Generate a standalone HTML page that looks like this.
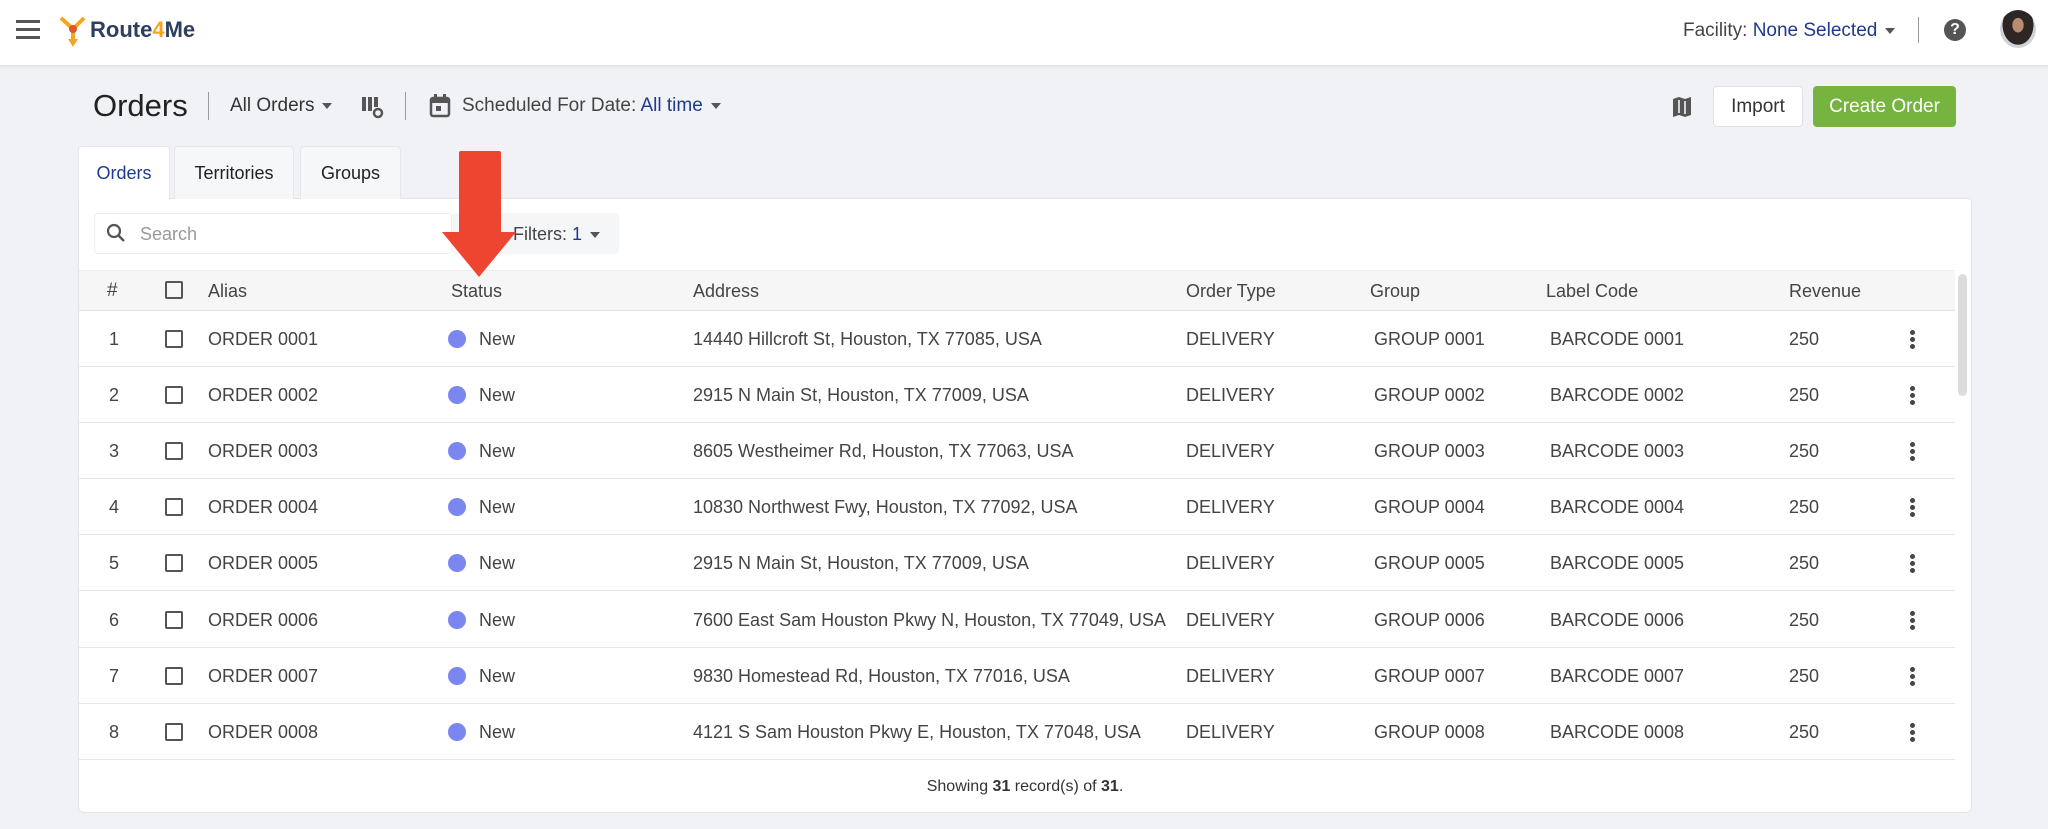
<!DOCTYPE html>
<html><head><meta charset="utf-8"><style>
*{box-sizing:border-box;margin:0;padding:0}
body{width:2048px;height:829px;background:#f1f2f6;font-family:"Liberation Sans",sans-serif;color:#333;position:relative;overflow:hidden;font-size:18px}
.a{position:absolute;white-space:nowrap}
.hdr{left:0;top:0;width:2048px;height:66px;background:#fff;border-bottom:1px solid #e2e3e8;box-shadow:0 1px 3px rgba(0,0,0,.06)}
.blue{color:#1e3a8a}
.card{left:78px;top:198px;width:1894px;height:615px;background:#fff;border:1px solid #e3e4e8;border-radius:0 4px 6px 6px}
.tab{top:146px;height:53px;background:#f6f7f9;border:1px solid #e6e7eb;border-bottom:none;border-radius:4px 4px 0 0;font-size:18px;text-align:center;line-height:52px;color:#222}
.th{top:270px;left:79px;width:1876px;height:41px;background:#f6f6f7;border-bottom:1px solid #e3e3e3;border-top:1px solid #eee}
.row{left:79px;width:1876px;height:56px;border-bottom:1px solid #e8e8e8}
.cell{position:absolute;top:0;line-height:56px;font-size:18px;color:#444}
.cb{position:absolute;width:18px;height:18px;border:2px solid #555;border-radius:2px}
.dot{position:absolute;width:18px;height:18px;border-radius:50%;background:#7b87f0}
.keb{position:absolute;width:5px;height:5px;border-radius:50%;background:#444}
.caret{display:inline-block;width:0;height:0;border-left:5px solid transparent;border-right:5px solid transparent;border-top:6px solid #555;vertical-align:middle;margin-left:8px}
</style></head><body>
<div class="a hdr"></div>
<div class="a" style="left:16px;top:20px;width:24px;height:3px;background:#555"></div>
<div class="a" style="left:16px;top:28px;width:24px;height:3px;background:#555"></div>
<div class="a" style="left:16px;top:36px;width:24px;height:3px;background:#555"></div>
<svg class="a" style="left:58px;top:15px" width="30" height="34" viewBox="0 0 30 34"><path d="M3 3L15 14L26 3M15 14L15 26" stroke="#f4a623" stroke-width="4" fill="none"/><circle cx="15" cy="14" r="4" fill="#e0562a"/><path d="M10 24L15 32L20 24Z" fill="#f4a623"/></svg>
<div class="a" style="left:90px;top:17px;font-size:22px;font-weight:bold;color:#2d3e60">Route<span style="color:#f4a623">4</span>Me</div>
<div class="a" style="left:1683px;top:20px;font-size:19px;color:#444">Facility: <span class="blue">None Selected</span><span class="caret"></span></div>
<div class="a" style="left:1918px;top:17px;width:1px;height:26px;background:#999"></div>
<div class="a" style="left:1944px;top:19px;width:22px;height:22px;border-radius:50%;background:#555;color:#fff;font-size:16px;font-weight:bold;text-align:center;line-height:22px">?</div>
<div class="a" style="left:2000px;top:10px;width:36px;height:38px;border-radius:50%;background:radial-gradient(ellipse at 50% 40%,#b88c70 0 22%,#2e2624 23% 60%,#cfd3d8 61%);"></div>

<div class="a" style="left:93px;top:88px;font-size:31px;color:#222">Orders</div>
<div class="a" style="left:208px;top:92px;width:1px;height:28px;background:#999"></div>
<div class="a" style="left:230px;top:95px;font-size:19px;color:#333">All Orders<span class="caret"></span></div>
<svg class="a" style="left:361px;top:96px" width="24" height="24" viewBox="0 0 24 24"><rect x="1" y="1" width="4" height="14" fill="#555"/><rect x="7" y="1" width="4" height="14" fill="#555"/><rect x="13" y="1" width="4" height="10" fill="#555"/><circle cx="17" cy="17" r="4" fill="none" stroke="#555" stroke-width="2.5"/></svg>
<div class="a" style="left:405px;top:92px;width:1px;height:28px;background:#999"></div>
<svg class="a" style="left:429px;top:94px" width="22" height="24" viewBox="0 0 22 24"><rect x="2" y="4" width="18" height="18" rx="2" fill="none" stroke="#555" stroke-width="2.5"/><rect x="2" y="4" width="18" height="5" fill="#555"/><rect x="5" y="0" width="3" height="5" fill="#555"/><rect x="14" y="0" width="3" height="5" fill="#555"/><rect x="7" y="12" width="5" height="5" fill="#555"/></svg>
<div class="a" style="left:462px;top:95px;font-size:19px;color:#444">Scheduled For Date: <span class="blue">All time</span><span class="caret"></span></div>
<svg class="a" style="left:1672px;top:96px" width="20" height="22" viewBox="0 0 20 22"><path d="M1 3L7 1L13 3L19 1V19L13 21L7 19L1 21Z" fill="#555"/><path d="M7 4V17M13 5V18" stroke="#fff" stroke-width="1.5"/></svg>
<div class="a" style="left:1713px;top:86px;width:90px;height:41px;background:#fff;border:1px solid #e0e1e5;border-radius:4px;text-align:center;line-height:39px;font-size:19px;color:#333">Import</div>
<div class="a" style="left:1813px;top:86px;width:143px;height:41px;background:#77b43f;border-radius:4px;text-align:center;line-height:41px;font-size:19px;color:#fff">Create Order</div>

<div class="a card"></div>
<div class="a tab" style="left:78px;width:92px;background:#fff;color:#1e3a8a;height:54px;z-index:2">Orders</div>
<div class="a tab" style="left:174px;width:120px">Territories</div>
<div class="a tab" style="left:300px;width:101px">Groups</div>

<div class="a" style="left:94px;top:213px;width:358px;height:41px;border:1px solid #eceef1;border-radius:4px;background:#fff"></div>
<svg class="a" style="left:106px;top:223px" width="20" height="20" viewBox="0 0 20 20"><circle cx="8" cy="8" r="6" fill="none" stroke="#555" stroke-width="2.2"/><path d="M12.5 12.5L18 18" stroke="#555" stroke-width="2.4"/></svg>
<div class="a" style="left:140px;top:224px;font-size:18px;color:#999">Search</div>
<div class="a" style="left:452px;top:213px;width:167px;height:41px;background:#f5f6f8;border-radius:4px"></div>
<div class="a" style="left:513px;top:224px;font-size:18px;color:#444">Filters: <span class="blue">1</span><span class="caret"></span></div>

<div class="a th"></div>
<div class="a" style="left:107px;top:280px;font-size:19px;color:#444">#</div>
<div class="cb" style="left:165px;top:281px"></div>
<div class="a" style="left:208px;top:281px;color:#444">Alias</div>
<div class="a" style="left:451px;top:281px;color:#444">Status</div>
<div class="a" style="left:693px;top:281px;color:#444">Address</div>
<div class="a" style="left:1186px;top:281px;color:#444">Order Type</div>
<div class="a" style="left:1370px;top:281px;color:#444">Group</div>
<div class="a" style="left:1546px;top:281px;color:#444">Label Code</div>
<div class="a" style="left:1789px;top:281px;color:#444">Revenue</div>
<div class="a" style="left:1958px;top:274px;width:9px;height:122px;border-radius:5px;background:#dcdcdc"></div>

<div class="a" style="left:0;top:311px;width:2048px">
<div class="a row" style="top:0"><div class="cell" style="left:30px">1</div><div class="cb" style="left:86px;top:19px"></div><div class="cell" style="left:129px">ORDER 0001</div><div class="dot" style="left:369px;top:19px"></div><div class="cell" style="left:400px">New</div><div class="cell" style="left:614px">14440 Hillcroft St, Houston, TX 77085, USA</div><div class="cell" style="left:1107px">DELIVERY</div><div class="cell" style="left:1295px">GROUP 0001</div><div class="cell" style="left:1471px">BARCODE 0001</div><div class="cell" style="left:1710px">250</div><div class="keb" style="left:1831px;top:19px"></div><div class="keb" style="left:1831px;top:26px"></div><div class="keb" style="left:1831px;top:33px"></div></div>
<div class="a row" style="top:56px"><div class="cell" style="left:30px">2</div><div class="cb" style="left:86px;top:19px"></div><div class="cell" style="left:129px">ORDER 0002</div><div class="dot" style="left:369px;top:19px"></div><div class="cell" style="left:400px">New</div><div class="cell" style="left:614px">2915 N Main St, Houston, TX 77009, USA</div><div class="cell" style="left:1107px">DELIVERY</div><div class="cell" style="left:1295px">GROUP 0002</div><div class="cell" style="left:1471px">BARCODE 0002</div><div class="cell" style="left:1710px">250</div><div class="keb" style="left:1831px;top:19px"></div><div class="keb" style="left:1831px;top:26px"></div><div class="keb" style="left:1831px;top:33px"></div></div>
<div class="a row" style="top:112px"><div class="cell" style="left:30px">3</div><div class="cb" style="left:86px;top:19px"></div><div class="cell" style="left:129px">ORDER 0003</div><div class="dot" style="left:369px;top:19px"></div><div class="cell" style="left:400px">New</div><div class="cell" style="left:614px">8605 Westheimer Rd, Houston, TX 77063, USA</div><div class="cell" style="left:1107px">DELIVERY</div><div class="cell" style="left:1295px">GROUP 0003</div><div class="cell" style="left:1471px">BARCODE 0003</div><div class="cell" style="left:1710px">250</div><div class="keb" style="left:1831px;top:19px"></div><div class="keb" style="left:1831px;top:26px"></div><div class="keb" style="left:1831px;top:33px"></div></div>
<div class="a row" style="top:168px"><div class="cell" style="left:30px">4</div><div class="cb" style="left:86px;top:19px"></div><div class="cell" style="left:129px">ORDER 0004</div><div class="dot" style="left:369px;top:19px"></div><div class="cell" style="left:400px">New</div><div class="cell" style="left:614px">10830 Northwest Fwy, Houston, TX 77092, USA</div><div class="cell" style="left:1107px">DELIVERY</div><div class="cell" style="left:1295px">GROUP 0004</div><div class="cell" style="left:1471px">BARCODE 0004</div><div class="cell" style="left:1710px">250</div><div class="keb" style="left:1831px;top:19px"></div><div class="keb" style="left:1831px;top:26px"></div><div class="keb" style="left:1831px;top:33px"></div></div>
<div class="a row" style="top:224px"><div class="cell" style="left:30px">5</div><div class="cb" style="left:86px;top:19px"></div><div class="cell" style="left:129px">ORDER 0005</div><div class="dot" style="left:369px;top:19px"></div><div class="cell" style="left:400px">New</div><div class="cell" style="left:614px">2915 N Main St, Houston, TX 77009, USA</div><div class="cell" style="left:1107px">DELIVERY</div><div class="cell" style="left:1295px">GROUP 0005</div><div class="cell" style="left:1471px">BARCODE 0005</div><div class="cell" style="left:1710px">250</div><div class="keb" style="left:1831px;top:19px"></div><div class="keb" style="left:1831px;top:26px"></div><div class="keb" style="left:1831px;top:33px"></div></div>
<div class="a row" style="top:281px"><div class="cell" style="left:30px">6</div><div class="cb" style="left:86px;top:19px"></div><div class="cell" style="left:129px">ORDER 0006</div><div class="dot" style="left:369px;top:19px"></div><div class="cell" style="left:400px">New</div><div class="cell" style="left:614px">7600 East Sam Houston Pkwy N, Houston, TX 77049, USA</div><div class="cell" style="left:1107px">DELIVERY</div><div class="cell" style="left:1295px">GROUP 0006</div><div class="cell" style="left:1471px">BARCODE 0006</div><div class="cell" style="left:1710px">250</div><div class="keb" style="left:1831px;top:19px"></div><div class="keb" style="left:1831px;top:26px"></div><div class="keb" style="left:1831px;top:33px"></div></div>
<div class="a row" style="top:337px"><div class="cell" style="left:30px">7</div><div class="cb" style="left:86px;top:19px"></div><div class="cell" style="left:129px">ORDER 0007</div><div class="dot" style="left:369px;top:19px"></div><div class="cell" style="left:400px">New</div><div class="cell" style="left:614px">9830 Homestead Rd, Houston, TX 77016, USA</div><div class="cell" style="left:1107px">DELIVERY</div><div class="cell" style="left:1295px">GROUP 0007</div><div class="cell" style="left:1471px">BARCODE 0007</div><div class="cell" style="left:1710px">250</div><div class="keb" style="left:1831px;top:19px"></div><div class="keb" style="left:1831px;top:26px"></div><div class="keb" style="left:1831px;top:33px"></div></div>
<div class="a row" style="top:393px"><div class="cell" style="left:30px">8</div><div class="cb" style="left:86px;top:19px"></div><div class="cell" style="left:129px">ORDER 0008</div><div class="dot" style="left:369px;top:19px"></div><div class="cell" style="left:400px">New</div><div class="cell" style="left:614px">4121 S Sam Houston Pkwy E, Houston, TX 77048, USA</div><div class="cell" style="left:1107px">DELIVERY</div><div class="cell" style="left:1295px">GROUP 0008</div><div class="cell" style="left:1471px">BARCODE 0008</div><div class="cell" style="left:1710px">250</div><div class="keb" style="left:1831px;top:19px"></div><div class="keb" style="left:1831px;top:26px"></div><div class="keb" style="left:1831px;top:33px"></div></div>
</div>

<div class="a" style="left:78px;width:1894px;top:778px;text-align:center;font-size:16px;color:#333">Showing <b>31</b> record(s) of <b>31</b>.</div>

<svg class="a" style="left:441px;top:150px" width="76" height="130" viewBox="0 0 76 130"><path d="M18 3Q18 1 20 1H58Q60 1 60 3V82H75L38 127L1 82H18Z" fill="#ee4530"/></svg>
</body></html>
